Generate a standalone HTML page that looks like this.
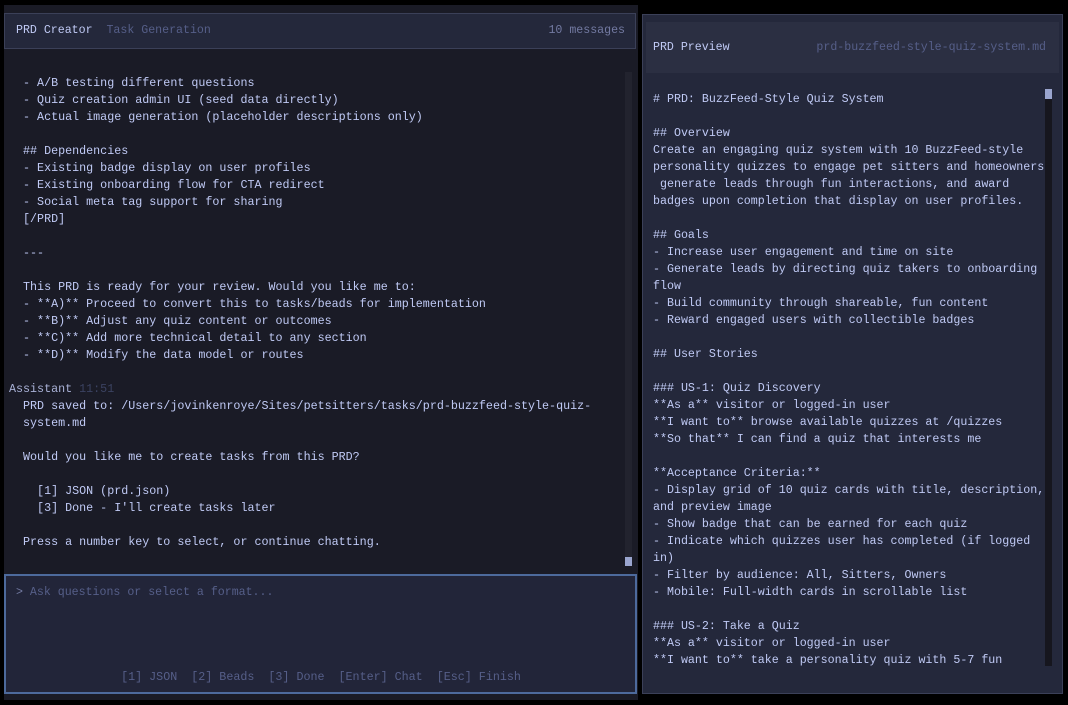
<!DOCTYPE html>
<html><head><meta charset="utf-8"><style>
*{margin:0;padding:0;box-sizing:border-box}
body{width:1068px;height:705px;background:#000;position:relative;overflow:hidden;font-family:"Liberation Mono",monospace;color:#c0caf5}
.abs{position:absolute}
pre{font-family:"Liberation Mono",monospace;white-space:pre;line-height:17px}
</style></head><body>
<!-- left panel -->
<div class="abs" style="left:4px;top:5px;width:634px;height:695px;background:#1a1b26"></div>
<div class="abs" style="left:4px;top:13px;width:632px;height:36px;background:#24283b;border:1px solid #3b4058"></div>
<div class="abs" style="left:16px;top:23px;font-size:11.6px;line-height:16px"><span style="color:#c0caf5">PRD Creator</span>&nbsp;&nbsp;<span style="color:#565f89">Task Generation</span></div>
<div class="abs" style="right:443px;top:23px;font-size:11.6px;line-height:16px;color:#737aa2">10 messages</div>
<div class="abs" style="left:625px;top:72px;width:7px;height:494px;background:#22232e"></div>
<div class="abs" style="left:625px;top:557px;width:7px;height:9px;background:#9aa5ce"></div>
<pre class="abs" style="left:9px;top:75px;font-size:11.7px;color:#c0caf5">  - A/B testing different questions
  - Quiz creation admin UI (seed data directly)
  - Actual image generation (placeholder descriptions only)

  ## Dependencies
  - Existing badge display on user profiles
  - Existing onboarding flow for CTA redirect
  - Social meta tag support for sharing
  [/PRD]

  ---

  This PRD is ready for your review. Would you like me to:
  - **A)** Proceed to convert this to tasks/beads for implementation
  - **B)** Adjust any quiz content or outcomes
  - **C)** Add more technical detail to any section
  - **D)** Modify the data model or routes

<span style="color:#a9b1d6">Assistant</span> <span style="color:#3b4261">11:51</span>
  PRD saved to: /Users/jovinkenroye/Sites/petsitters/tasks/prd-buzzfeed-style-quiz-
  system.md

  Would you like me to create tasks from this PRD?

    [1] JSON (prd.json)
    [3] Done - I'll create tasks later

  Press a number key to select, or continue chatting.</pre>
<div class="abs" style="left:4px;top:574px;width:633px;height:120px;background:#222539;border:2px solid #4d6a9c"></div>
<div class="abs" style="left:16px;top:585px;font-size:11.6px;line-height:16px;color:#565f89"><span style="color:#737aa2">&gt;</span> Ask questions or select a format...</div>
<div class="abs" style="left:0;width:642px;text-align:center;top:669px;font-size:11.7px;line-height:16px;color:#565f89;white-space:pre">[1] JSON  [2] Beads  [3] Done  [Enter] Chat  [Esc] Finish</div>
<!-- right panel -->
<div class="abs" style="left:642px;top:14px;width:421px;height:680px;background:#24283b;border:1px solid #3b4058"></div>
<div class="abs" style="left:646px;top:22px;width:413px;height:51px;background:#2b2f42"></div>
<div class="abs" style="left:653px;top:40px;font-size:11.6px;line-height:16px;color:#c0caf5">PRD Preview</div>
<div class="abs" style="right:22px;top:40px;font-size:11.6px;line-height:16px;color:#565f89">prd-buzzfeed-style-quiz-system.md</div>
<div class="abs" style="left:1045px;top:89px;width:7px;height:577px;background:#16161e"></div>
<div class="abs" style="left:1045px;top:89px;width:7px;height:10px;background:#9aa5ce"></div>
<pre class="abs" style="left:653px;top:91px;font-size:11.65px;color:#c0caf5"># PRD: BuzzFeed-Style Quiz System

## Overview
Create an engaging quiz system with 10 BuzzFeed-style
personality quizzes to engage pet sitters and homeowners
 generate leads through fun interactions, and award
badges upon completion that display on user profiles.

## Goals
- Increase user engagement and time on site
- Generate leads by directing quiz takers to onboarding
flow
- Build community through shareable, fun content
- Reward engaged users with collectible badges

## User Stories

### US-1: Quiz Discovery
**As a** visitor or logged-in user
**I want to** browse available quizzes at /quizzes
**So that** I can find a quiz that interests me

**Acceptance Criteria:**
- Display grid of 10 quiz cards with title, description,
and preview image
- Show badge that can be earned for each quiz
- Indicate which quizzes user has completed (if logged
in)
- Filter by audience: All, Sitters, Owners
- Mobile: Full-width cards in scrollable list

### US-2: Take a Quiz
**As a** visitor or logged-in user
**I want to** take a personality quiz with 5-7 fun</pre>
</body></html>
